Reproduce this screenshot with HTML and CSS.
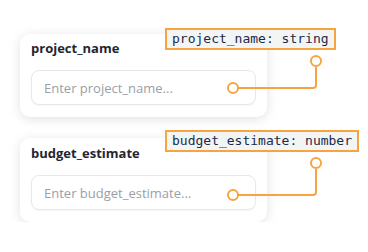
FILE: index.html
```html
<!DOCTYPE html>
<html lang="en">

<head>
    <meta charset="UTF-8">
    <title>Field Types</title>
    <link rel="stylesheet" href="styles.css">
</head>

<body>
    <div class="fields">
        <div class="field-card">
            <label class="field-label" for="project_name">project_name</label>
            <input type="text" id="project_name" class="field-input" placeholder="Enter project_name...">
            <span class="type-tag tag-one">project_name: string</span>
            <svg class="connector conn-one" width="110" height="50" viewBox="0 0 110 50">
                <path d="M17 38 H92 Q95 38 95 35 V17" fill="none" stroke="#f7a440" stroke-width="2"/>
                <circle cx="12" cy="38" r="5" fill="#fff" stroke="#f7a440" stroke-width="2"/>
                <circle cx="95" cy="11" r="5" fill="#fff" stroke="#f7a440" stroke-width="2"/>
            </svg>
        </div>

        <div class="field-card card-two">
            <label class="field-label" for="budget_estimate">budget_estimate</label>
            <input type="text" id="budget_estimate" class="field-input" placeholder="Enter budget_estimate...">
            <span class="type-tag tag-two">budget_estimate: number</span>
            <svg class="connector conn-two" width="110" height="50" viewBox="0 0 110 50">
                <path d="M17 43 H92 Q95 43 95 40 V17" fill="none" stroke="#f7a440" stroke-width="2"/>
                <circle cx="12" cy="43" r="5" fill="#fff" stroke="#f7a440" stroke-width="2"/>
                <circle cx="95" cy="11" r="5" fill="#fff" stroke="#f7a440" stroke-width="2"/>
            </svg>
        </div>
    </div>
</body>

</html>
```

FILE: styles.css
```css
body {
    font-family: "Open Sans", Arial, sans-serif;
    background-color: #fff;
    margin: 0;
    width: 100%;
}

.fields {
    display: flex;
    flex-direction: column;
    gap: 21px;
    padding: 34px 0 0 20px;
}

.field-card {
    position: relative;
    width: 247px;
    box-sizing: border-box;
    padding: 5px 11px 12px 11px;
    background-color: #fff;
    border-radius: 10px;
    box-shadow: 0 2px 12px rgba(0, 0, 0, 0.12);
    display: flex;
    flex-direction: column;
}

.card-two {
    padding-top: 6px;
}

.field-label {
    font-size: 13px;
    font-weight: 700;
    color: #1f2633;
    line-height: 18px;
    margin-bottom: 13px;
}

.field-input {
    height: 35px;
    box-sizing: border-box;
    padding: 0 12px;
    border: 1px solid #e6e8eb;
    border-radius: 8px;
    font-family: "Open Sans", Arial, sans-serif;
    font-size: 13px;
    color: #333;
    background-color: #fff;
    box-shadow: 0 1px 2px rgba(0, 0, 0, 0.04);
}

.field-input::placeholder {
    color: #9aa0a6;
}

/* type tag shown over the card */
.type-tag {
    position: absolute;
    left: 145px;
    height: 22px;
    box-sizing: border-box;
    padding: 0 5px;
    border: 2px solid #f7a440;
    background-color: #f3f5f5;
    font-family: "DejaVu Sans Mono", "Liberation Mono", monospace;
    font-size: 13px;
    line-height: 18px;
    color: #1b2a48;
    white-space: nowrap;
}

.tag-one {
    top: -6px;
}

.tag-two {
    top: -8px;
}

.connector {
    position: absolute;
    left: 201px;
    overflow: visible;
}

.conn-one {
    top: 16px;
}

.conn-two {
    top: 14px;
}
```
